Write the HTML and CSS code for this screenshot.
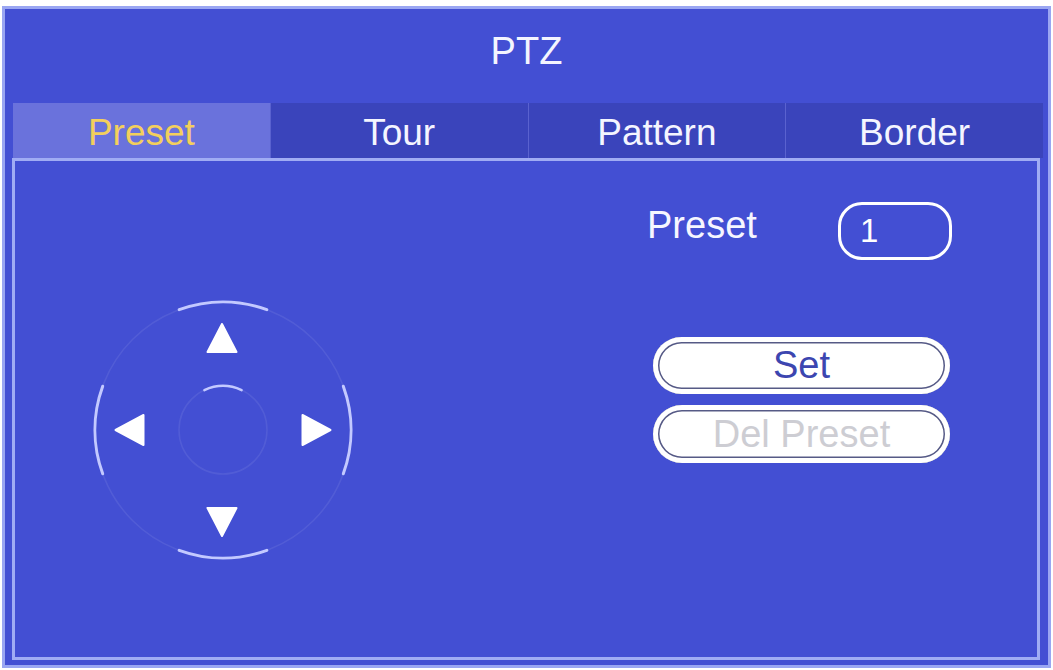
FILE: index.html
```html
<!DOCTYPE html>
<html lang="en">
<head>
<meta charset="utf-8">
<title>PTZ</title>
<link rel="stylesheet" href="styles.css">
</head>
<body>
<div class="window">
  <div class="title">PTZ</div>
  <div class="tabs">
    <div class="tab active">Preset</div>
    <div class="tab">Tour</div>
    <div class="tab">Pattern</div>
    <div class="tab">Border</div>
  </div>
  <div class="panel">
    <div class="joy-col">
      <svg class="joystick" width="280" height="280" viewBox="0 0 280 280">
        <circle cx="140" cy="140" r="128" fill="none" stroke="rgba(255,255,255,0.08)" stroke-width="1.5"/>
        <circle cx="140" cy="140" r="44" fill="none" stroke="rgba(255,255,255,0.08)" stroke-width="1.5"/>
        <g fill="none" stroke="#c3c9ff" stroke-width="3" stroke-linecap="round">
          <path d="M96.2 19.7 A128 128 0 0 1 183.8 19.7"/>
          <path d="M96.2 260.3 A128 128 0 0 0 183.8 260.3"/>
          <path d="M19.7 96.2 A128 128 0 0 0 19.7 183.8"/>
          <path d="M260.3 96.2 A128 128 0 0 1 260.3 183.8"/>
          <path d="M121.4 100.1 A44 44 0 0 1 158.6 100.1" stroke-width="2.5"/>
        </g>
        <g fill="#ffffff" stroke="#ffffff" stroke-width="2" stroke-linejoin="round">
          <polygon points="124.5,62 153.5,62 139,34"/>
          <polygon points="124.5,218 153.5,218 139,246"/>
          <polygon points="60.5,125 60.5,155 32.5,140"/>
          <polygon points="219.5,125 219.5,155 247.5,140"/>
        </g>
      </svg>
    </div>
    <div class="form-col">
      <div class="field-row">
        <div class="field-label">Preset</div>
        <div class="field-input">1</div>
      </div>
      <div class="btn btn-set">Set</div>
      <div class="btn btn-del">Del Preset</div>
    </div>
  </div>
</div>
</body>
</html>
```

FILE: styles.css
```css
* { box-sizing: border-box; }

html, body {
  margin: 0;
  padding: 0;
  background: #ffffff;
}

body {
  font-family: "Liberation Sans", Arial, sans-serif;
  color: #ffffff;
}

.window {
  margin: 6px 2px 0 2px;
  width: 1049px;
  height: 662px;
  background: #434fd3;
  border: 3px solid #9aa6f2;
  display: flex;
  flex-direction: column;
}

.title {
  height: 94px;
  line-height: 84px;
  text-align: center;
  font-size: 38px;
  color: #f4f5ff;
}

.tabs {
  display: flex;
  height: 55px;
  margin: 0 5px 0 8px;
  gap: 1px;
  background: #5a62cf;
}

.tab {
  flex: 1;
  background: #3a44bb;
  text-align: center;
  font-size: 37px;
  line-height: 51px;
  padding-top: 4px;
  color: #f4f5ff;
}

.tab.active {
  background: #6a72dc;
  color: #f3cf5c;
}

.panel {
  height: 502px;
  margin: 0 8px 0 7px;
  border: 3px solid #a0acf4;
  display: grid;
  grid-template-columns: 632px 1fr;
}

.joy-col {
  padding: 129px 0 0 68px;
}

.joystick {
  display: block;
}

.form-col {
  padding-top: 41px;
}

.field-row {
  display: flex;
  align-items: flex-start;
  height: 58px;
}

.field-label {
  width: 191px;
  font-size: 38px;
  line-height: 38px;
  margin-top: 4px;
  color: #f6f6ff;
}

.field-input {
  width: 114px;
  height: 58px;
  border: 3px solid #ffffff;
  border-radius: 24px;
  padding-left: 19px;
  font-size: 33px;
  line-height: 52px;
  color: #ffffff;
}

.btn {
  margin-left: 6px;
  width: 297px;
  height: 57px;
  border-radius: 29px;
  background: #ffffff;
  box-shadow: inset 0 0 0 5px #ffffff, inset 0 0 0 6.5px #565a86;
  text-align: center;
  font-size: 38px;
  line-height: 57px;
}

.btn-set {
  margin-top: 77px;
  color: #3c46b0;
}

.btn-del {
  margin-top: 11px;
  height: 58px;
  line-height: 58px;
  color: #cdcdd3;
}
```
